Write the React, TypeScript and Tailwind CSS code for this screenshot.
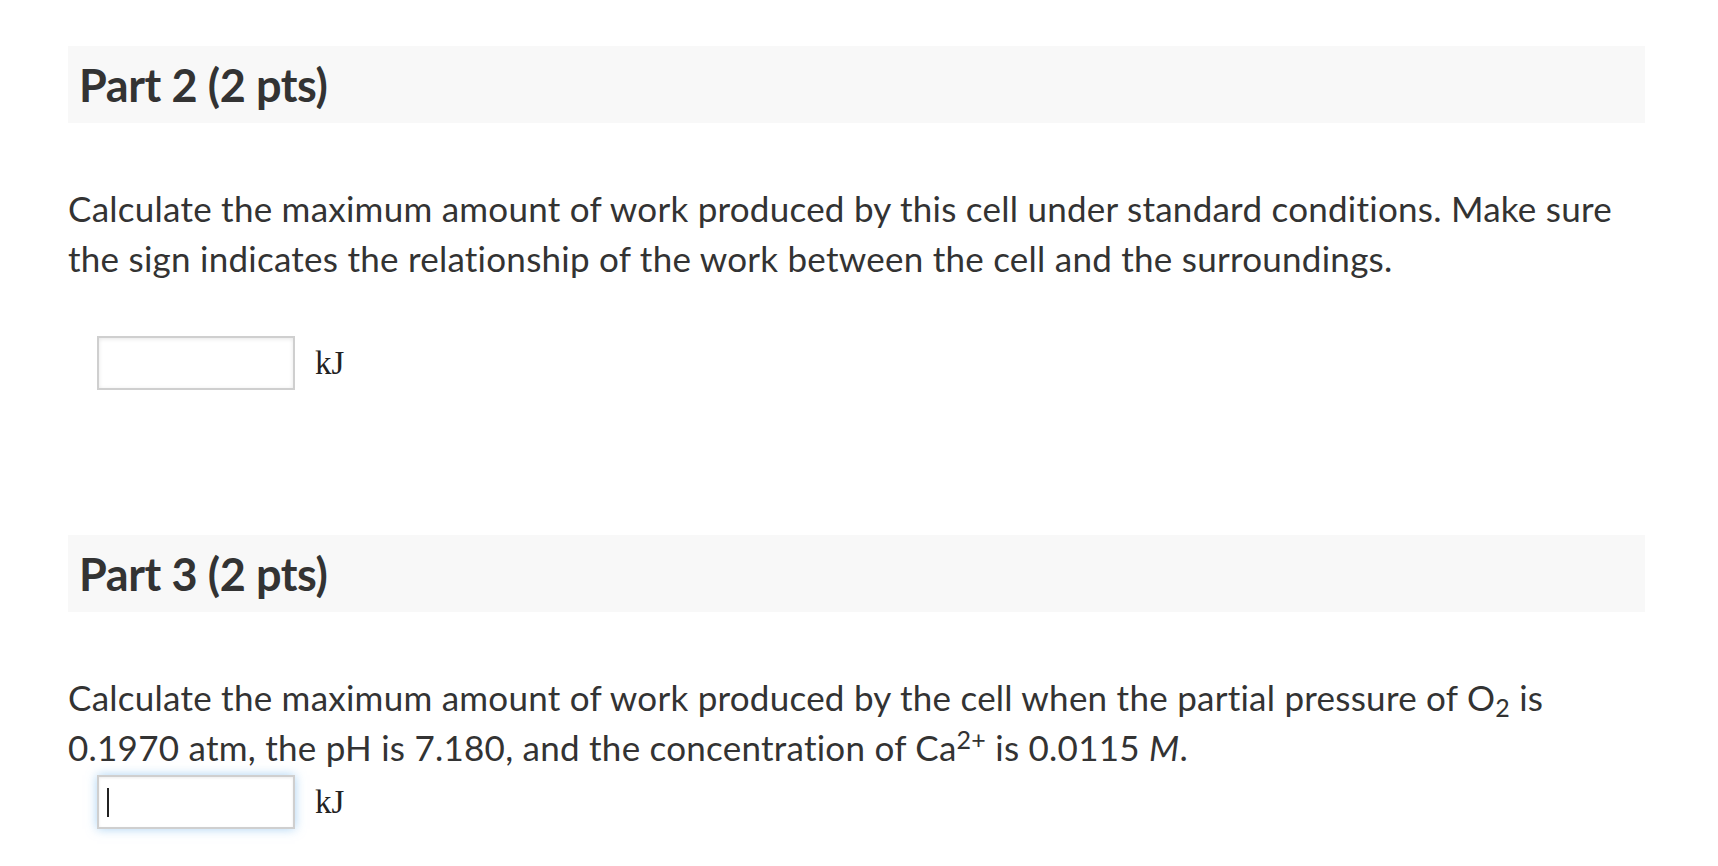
import React from 'react';

const PartHeader = ({ title }: { title: string }) => (
  <div className="flex h-[77px] items-center bg-[#f8f8f8] pl-[11px]">
    <h2 className="pt-[2px] text-[45px] font-bold leading-none tracking-[-0.4px] text-[#333]">{title}</h2>
  </div>
);

const AnswerRow = ({ focused }: { focused?: boolean }) => (
  <div className="flex items-center pl-[29px]">
    <div
      className={
        focused
          ? 'flex h-[54px] w-[198px] items-center border-2 border-[#cfcfcf] bg-white pl-[8px] shadow-[0_0_10px_rgba(102,175,233,0.55),inset_0_1px_3px_rgba(0,0,0,0.08)]'
          : 'h-[54px] w-[198px] border-2 border-[#cfcfcf] bg-white shadow-[inset_0_1px_4px_rgba(0,0,0,0.1)]'
      }
    >
      {focused && <span className="h-[29px] w-[2px] bg-[#222]" />}
    </div>
    <span className="ml-[20px] font-['Liberation_Serif',serif] text-[33px] leading-none text-[#222]">kJ</span>
  </div>
);

export default function App() {
  return (
    <div className="min-h-screen bg-white font-['Lato',sans-serif] text-[#333]">
      <div className="ml-[68px] w-[1577px] pt-[46px]">
        <PartHeader title="Part 2 (2 pts)" />
        <p className="mt-[60px] text-[35px] leading-[50px] tracking-[0.25px]">
          Calculate the maximum amount of work produced by this cell under standard conditions. Make sure the sign
          indicates the relationship of the work between the cell and the surroundings.
        </p>
        <div className="mt-[53px]">
          <AnswerRow />
        </div>

        <div className="mt-[145px]">
          <PartHeader title="Part 3 (2 pts)" />
        </div>
        <p className="mt-[60px] text-[35px] leading-[50px] tracking-[0.25px]">
          Calculate the maximum amount of work produced by the cell when the partial pressure of O
          <sub className="text-[25px] leading-none">2</sub> is 0.1970 atm, the pH is 7.180, and the concentration of Ca
          <sup className="text-[25px] leading-none">2+</sup> is 0.0115 <i>M</i>.
        </p>
        <div className="mt-[3px]">
          <AnswerRow focused />
        </div>
      </div>
    </div>
  );
}
